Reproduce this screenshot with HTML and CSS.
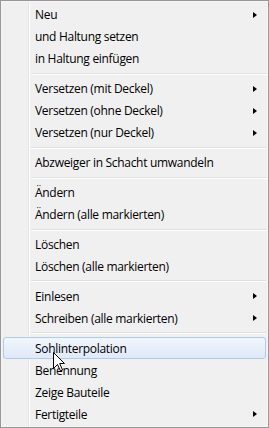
FILE: index.html
```html
<!DOCTYPE html>
<html lang="de">
<head>
    <meta charset="UTF-8">
    <title>Kontextmenü</title>
    <link rel="stylesheet" href="styles.css">
</head>
<body>

    <div class="menu">
        <div class="item sub">Neu</div>
        <div class="item">und Haltung setzen</div>
        <div class="item">in Haltung einfügen</div>
        <div class="sep"></div>
        <div class="item sub">Versetzen (mit Deckel)</div>
        <div class="item sub">Versetzen (ohne Deckel)</div>
        <div class="item sub">Versetzen (nur Deckel)</div>
        <div class="sep"></div>
        <div class="item">Abzweiger in Schacht umwandeln</div>
        <div class="sep"></div>
        <div class="item">Ändern</div>
        <div class="item">Ändern (alle markierten)</div>
        <div class="sep"></div>
        <div class="item">Löschen</div>
        <div class="item">Löschen (alle markierten)</div>
        <div class="sep"></div>
        <div class="item sub">Einlesen</div>
        <div class="item sub">Schreiben (alle markierten)</div>
        <div class="sep"></div>
        <div class="item hover">Sohlinterpolation</div>
        <div class="item">Benennung</div>
        <div class="item">Zeige Bauteile</div>
        <div class="item sub">Fertigteile</div>

        <svg class="cursor" width="13" height="20" viewBox="0 0 13 20">
            <path d="M0.5 0.5 L0.5 16.5 L4.5 12.5 L7.5 19 L9.5 18 L6.7 11.5 L11.5 11.5 Z" fill="#fff" stroke="#000" stroke-width="1"/>
        </svg>
    </div>

</body>
</html>
```

FILE: styles.css
```css
body {
    margin: 0;
    font-family: "Open Sans", "Noto Sans", sans-serif;
    font-size: 12px;
    letter-spacing: -0.3px;
    color: #000;
}
.menu {
    position: relative;
    width: 263px;
    height: 421px;
    padding: 3px 2px 2px 2px;
    border: 1px solid #979797;
    box-shadow: inset 1px 1px 0 #f5f5f5, inset -1px -1px 0 #f5f5f5;
    background:
        linear-gradient(to right, transparent 28px, #e2e3e3 28px, #e2e3e3 29px, #ffffff 29px, #ffffff 30px, transparent 30px),
        #f0f0f0;
    background-origin: border-box;
    background-clip: padding-box;
    display: flex;
    flex-direction: column;
}
.item {
    height: 22px;
    padding: 0 9px 0 31px;
    display: flex;
    align-items: center;
    justify-content: space-between;
    white-space: nowrap;
    border: 1px solid transparent;
    border-radius: 3px;
    box-sizing: border-box;
}
.item.sub::after {
    content: "";
    border-left: 4px solid #000;
    border-top: 3.5px solid transparent;
    border-bottom: 3.5px solid transparent;
    margin-right: -1px;
}
.item.hover {
    border-color: #aecbec;
    background: linear-gradient(to bottom, #f1f6fd, #dfe9f7);
}
.sep {
    height: 8px;
    margin-left: 28px;
    background: linear-gradient(to bottom, transparent 3px, #e0e0e0 3px, #e0e0e0 4px, #ffffff 4px, #ffffff 5px, transparent 5px);
}
.cursor {
    position: absolute;
    left: 52px;
    top: 351px;
}
```
